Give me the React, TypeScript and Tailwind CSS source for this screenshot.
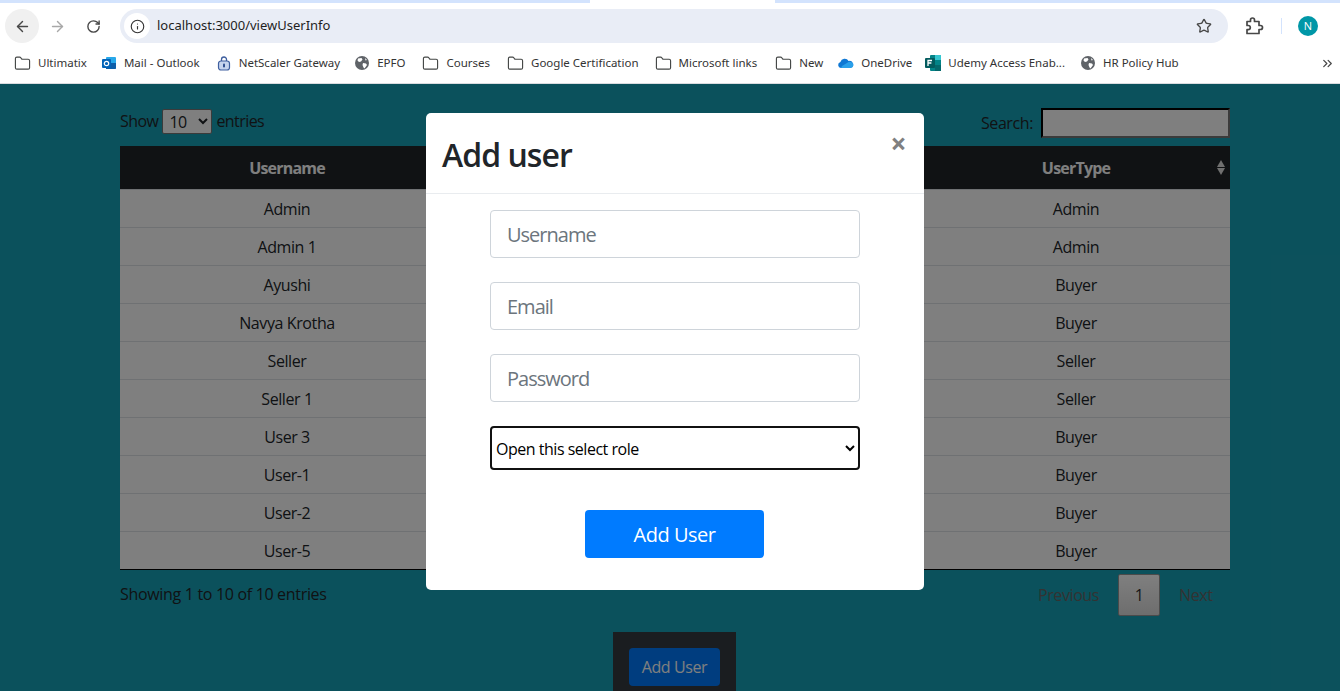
import { ArrowLeft, ArrowRight, ChevronsRight, Folder, Info, RotateCw, Star } from 'lucide-react';

const users = [
  ['Admin', 'Admin'],
  ['Admin 1', 'Admin'],
  ['Ayushi', 'Buyer'],
  ['Navya Krotha', 'Buyer'],
  ['Seller', 'Seller'],
  ['Seller 1', 'Seller'],
  ['User 3', 'Buyer'],
  ['User-1', 'Buyer'],
  ['User-2', 'Buyer'],
  ['User-5', 'Buyer'],
];

const FolderIcon = () => <Folder size={17} strokeWidth={1.6} className="text-[#444746]" />;

const GlobeIcon = () => (
  <svg width="16" height="16" viewBox="0 0 16 16">
    <circle cx="8" cy="8" r="7" fill="#5f6368" />
    <path d="M4 3.500 7.500 3l1 1.500L7 6.500 5 7 3.500 5.500zM9 8l3 .5 1 1.500-2.500 3.500-1-1L8.500 10zM11 3l2 2-1.500.5z" fill="#fff" />
  </svg>
);

const OutlookIcon = () => (
  <svg width="16" height="16" viewBox="0 0 16 16">
    <rect x="5" y="2" width="10" height="12" rx="1" fill="#28a8ea" />
    <path d="M5 8h10v5a1 1 0 0 1-1 1H5z" fill="#0f5ea8" />
    <rect x="1" y="4" width="9" height="9" rx="1" fill="#0364b8" />
    <circle cx="5.500" cy="8.500" r="2.200" fill="none" stroke="#fff" strokeWidth="1.200" />
  </svg>
);

const LockIcon = () => (
  <svg width="16" height="16" viewBox="0 0 16 16">
    <path d="M5.500 6V4.500a2.500 2.500 0 0 1 5 0V6" fill="none" stroke="#3f5f9f" strokeWidth="1.300" />
    <rect x="2.500" y="6" width="11" height="9" rx="2.500" fill="#c6d4ee" stroke="#3f5f9f" strokeWidth="1.200" />
    <rect x="7" y="8.500" width="2" height="4" rx="1" fill="#2f4f8f" />
  </svg>
);

const CloudIcon = () => (
  <svg width="17" height="16" viewBox="0 0 17 16">
    <path d="M4 13a3 3 0 0 1-.6-5.900A4.500 4.500 0 0 1 11.600 6 3.600 3.600 0 0 1 13.500 13z" fill="#0f78d4" />
    <path d="M4 13h9.500a3 3 0 0 0 1-5.800 3.500 3.500 0 0 0-4.200.600L5 11z" fill="#2aa0ea" />
  </svg>
);

const FormsIcon = () => (
  <svg width="16" height="18" viewBox="0 0 16 18">
    <rect x="5" y="1" width="11" height="16" rx="1" fill="#038387" />
    <rect x="10" y="1" width="6" height="5" fill="#37c6d0" />
    <rect x="10" y="11" width="6" height="6" fill="#04686b" />
    <rect x="0" y="4" width="10" height="10" rx="1" fill="#035b5e" />
    <path d="M3 12V6.500h4M3 9h3.400" fill="none" stroke="#fff" strokeWidth="1.300" />
  </svg>
);

const ExtensionIcon = () => (
  <svg width="20" height="20" viewBox="0 0 20 20" fill="none" stroke="#474747" strokeWidth="1.700" strokeLinejoin="round">
    <path d="M3 5.500h3.500V4a2 2 0 0 1 4 0v1.500H15v4h1.500a2 2 0 0 1 0 4H15V17.500H3v-3.800h1.200a2 2 0 0 0 0-4.200H3z" />
  </svg>
);

const bookmarks = [
  { icon: <FolderIcon />, label: 'Ultimatix', cls: '' },
  { icon: <OutlookIcon />, label: 'Mail - Outlook', cls: '-ml-[1px]' },
  { icon: <LockIcon />, label: 'NetScaler Gateway', cls: 'ml-[1px]' },
  { icon: <GlobeIcon />, label: 'EPFO', cls: '-ml-[1px]' },
  { icon: <FolderIcon />, label: 'Courses', cls: 'ml-[2px]' },
  { icon: <FolderIcon />, label: 'Google Certification', cls: 'ml-[2px]' },
  { icon: <FolderIcon />, label: 'Microsoft links', cls: 'ml-[1px]' },
  { icon: <FolderIcon />, label: 'New', cls: 'ml-[3px]' },
  { icon: <CloudIcon />, label: 'OneDrive', cls: '-ml-[1px]' },
  { icon: <FormsIcon />, label: 'Udemy Access Enab...', cls: '-ml-[2px]' },
  { icon: <GlobeIcon />, label: 'HR Policy Hub', cls: '' },
];

export default function App() {
  return (
    <div className="h-[691px] w-[1340px] overflow-hidden flex flex-col bg-white font-['Open_Sans','Noto_Sans',sans-serif] text-[#212529]">
      {/* browser chrome */}
      <div className="h-[3px] flex bg-[#d3e3fd]">
        <div className="w-[590px]" />
        <div className="w-[185px] bg-white" />
      </div>
      <div className="h-[43px] flex items-center pl-[5px] pr-[19px] pt-[3px]">
        <div className="w-[34px] h-[34px] rounded-full bg-[#f0f0f0] flex items-center justify-center">
          <ArrowLeft size={17} strokeWidth={2} className="text-[#474747]" />
        </div>
        <ArrowRight size={17} strokeWidth={2} className="ml-[10px] text-[#a8a8a8]" />
        <RotateCw size={15} strokeWidth={2.2} className="ml-[20px] text-[#474747]" />
        <div className="ml-[19px] w-[1108px] h-[34px] rounded-full bg-[#e9edf6] flex items-center pl-[4px] pr-[16px]">
          <div className="w-[26px] h-[26px] rounded-full bg-white flex items-center justify-center">
            <Info size={15} strokeWidth={1.8} className="text-[#333]" />
          </div>
          <span className="ml-[7px] text-[13px] font-['Noto_Sans',sans-serif] text-[#1f1f1f]">localhost:3000/viewUserInfo</span>
          <Star size={16} strokeWidth={2} className="ml-auto text-[#474747]" />
        </div>
        <div className="ml-[16px]">
          <ExtensionIcon />
        </div>
        <div className="ml-[17px] w-px h-[16px] bg-[#d3e3fd]" />
        <div className="ml-[16px] w-[20px] h-[20px] rounded-full bg-[#0097a7] text-white text-[11px] flex items-center justify-center">N</div>
      </div>
      <div className="h-[38px] border-b border-[#dadce0] flex items-center pl-[14px] pr-[5px] pb-[3px] gap-[15px] text-[11.5px] font-['Noto_Sans',sans-serif] text-[#333]">
        {bookmarks.map((b) => (
          <div key={b.label} className={`flex items-center gap-[7px] whitespace-nowrap ${b.cls}`}>
            {b.icon}
            <span>{b.label}</span>
          </div>
        ))}
        <ChevronsRight size={15} className="ml-auto text-[#474747]" />
      </div>

      {/* page */}
      <div className="relative flex-1 bg-[#17a2b8] overflow-hidden tracking-[-0.025em]">
        <div className="w-[1110px] ml-[120px] pt-[24px]">
          <div className="flex items-start justify-between h-[38px] text-base">
            <div className="flex items-center gap-[4px] leading-[27px] tracking-[-0.035em]">
              Show
              <select className="w-[50px] h-[25px] border border-[#767676] bg-white rounded-[2px] pl-[2px] text-base">
                <option>10</option>
              </select>
              entries
            </div>
            <div className="flex items-center gap-[8px]">
              Search:
              <input className="w-[189px] h-[30px] border-2 border-t-black border-l-black border-r-[#767676] border-b-[#767676] bg-white" />
            </div>
          </div>
          <table className="w-full table-fixed border-collapse text-center text-base bg-white">
            <thead>
              <tr className="h-[43px] bg-[#212529] text-white tracking-[-0.05em]">
                <th className="w-[334px] pt-[1px] font-bold">Username</th>
                <th />
                <th className="relative w-[308px] pt-[1px] font-bold">
                  UserType
                  <span className="absolute right-[5px] top-[14px] flex flex-col gap-[1px] text-[#e0e0e0]">
                    <span className="w-0 h-0 border-x-[4px] border-x-transparent border-b-[7px] border-b-current" />
                    <span className="w-0 h-0 border-x-[4px] border-x-transparent border-t-[7px] border-t-current" />
                  </span>
                </th>
              </tr>
            </thead>
            <tbody className="border-b border-black">
              {users.map(([name, type]) => (
                <tr key={name} className="h-[38px] border-t border-[#dee2e6]">
                  <td className="pt-[1px]">{name}</td>
                  <td />
                  <td className="pt-[1px]">{type}</td>
                </tr>
              ))}
            </tbody>
          </table>
          <div className="flex items-start justify-between">
            <span className="pt-[12px] text-base tracking-[-0.02em]">Showing 1 to 10 of 10 entries</span>
            <div className="flex items-center pt-[4px] text-base text-[#666]">
              <span className="pr-[19px]">Previous</span>
              <span className="w-[42px] h-[42px] flex items-center justify-center rounded-[2px] border border-[#979797] bg-gradient-to-b from-white to-[#dcdcdc] text-[#333]">1</span>
              <span className="w-[70px] pl-[19px]">Next</span>
            </div>
          </div>
        </div>
        <div className="absolute bottom-0 left-[613px] w-[123px] h-[59px] bg-[#343a40] px-[16px] pt-[16px]">
          <button className="w-[91px] h-[38px] rounded bg-[#007bff] text-white text-base tracking-[-0.025em]">Add User</button>
        </div>

        {/* modal */}
        <div className="absolute inset-0 bg-black/50 flex justify-center items-start pt-[29px] pl-[10px]">
          <div className="w-[498px] h-[477px] bg-white rounded-[5px] flex flex-col">
            <div className="h-[81px] border-b border-[#e9ecef] flex items-start justify-between pl-[16px] pr-[18px]">
              <h2 className="mt-[18px] text-[32px] leading-[48px] font-semibold tracking-[-0.03em]">Add user</h2>
              <span className="mt-[12px] text-[28px] leading-[36px] font-bold text-[#808080]">×</span>
            </div>
            <form className="flex flex-col items-center pt-[16px]">
              <input placeholder="Username" className="w-[370px] h-[48px] rounded border border-[#ced4da] px-[16px] text-xl tracking-[-0.05em] placeholder:text-[#6c757d]" />
              <input placeholder="Email" className="mt-[24px] w-[370px] h-[48px] rounded border border-[#ced4da] px-[16px] text-xl tracking-[-0.05em] placeholder:text-[#6c757d]" />
              <input placeholder="Password" className="mt-[24px] w-[370px] h-[48px] rounded border border-[#ced4da] px-[16px] text-xl tracking-[-0.05em] placeholder:text-[#6c757d]" />
              <select className="mt-[24px] w-[370px] h-[44px] rounded border-2 border-[#111] bg-white pt-[1px] text-base tracking-[-0.03em] text-black">
                <option>Open this select role</option>
              </select>
              <button type="button" className="mt-[40px] mr-[1px] w-[179px] h-[48px] pt-[1px] rounded bg-[#007bff] text-white text-xl tracking-[-0.025em]">Add User</button>
            </form>
          </div>
        </div>
      </div>
    </div>
  );
}
